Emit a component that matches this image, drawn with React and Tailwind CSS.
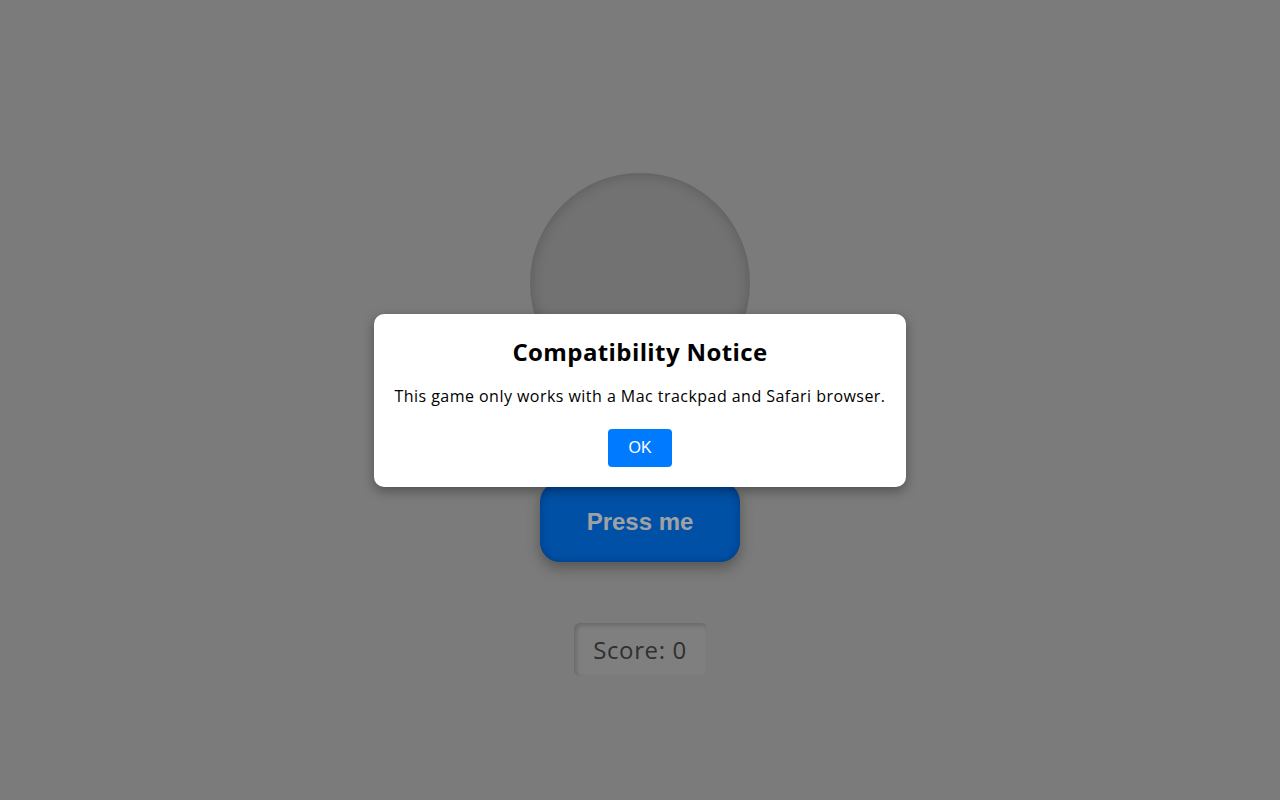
import React from "react";

const font = { fontFamily: '"Open Sans", "Noto Sans", sans-serif' };
const arial = { fontFamily: '"Liberation Sans", Arial, sans-serif' };

export default function App() {
  return (
    <div className="relative min-h-[800px] w-full bg-[#bdbdbd]" style={font}>
      {/* Game */}
      <div className="flex flex-col items-center pt-[173px]">
        <div className="h-[220px] w-[220px] rounded-full bg-[#afafaf] shadow-[inset_0_0_14px_rgba(0,0,0,0.22)]" />
        <button
          className="mt-[89px] h-[80px] w-[200px] rounded-[20px] bg-[#007bff] text-[24px] font-bold text-[#f4f8fc] shadow-[inset_0_0_8px_rgba(0,0,0,0.25),0_6px_14px_rgba(0,0,0,0.3)]"
          style={arial}
        >
          Press me
        </button>
        <div className="mt-[61px] flex h-[53px] w-[133px] items-center justify-center rounded-[6px] bg-[#c4c4c4] text-[24px] tracking-[0.6px] text-[#4a4a4a] shadow-[inset_2px_2px_5px_rgba(0,0,0,0.2)]">
          Score: 0
        </div>
      </div>

      {/* Overlay */}
      <div className="absolute inset-0 flex items-center justify-center bg-black/35">
        <div className="w-[532px] rounded-[10px] bg-white p-5 text-center shadow-[0_4px_12px_rgba(0,0,0,0.35)]">
          <h2 className="text-[24px] font-bold leading-[36px] tracking-[0.4px] text-black">Compatibility Notice</h2>
          <p className="mt-[14px] text-[16px] leading-[24px] tracking-[0.46px] text-black">
            This game only works with a Mac trackpad and Safari browser.
          </p>
          <button
            className="mt-[21px] h-[38px] w-[64px] rounded-[4px] bg-[#007bff] text-[16px] text-white"
            style={arial}
          >
            OK
          </button>
        </div>
      </div>
    </div>
  );
}
